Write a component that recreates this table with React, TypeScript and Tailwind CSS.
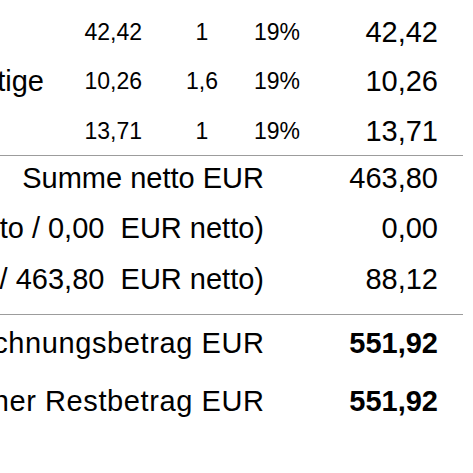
import React from 'react';

interface ItemRow {
  label: string;
  price: string;
  qty: string;
  tax: string;
  total: string;
}

interface SumRow {
  label: string;
  value: string;
  bold?: boolean;
}

const items: ItemRow[] = [
  { label: '', price: '42,42', qty: '1', tax: '19%', total: '42,42' },
  { label: 'Sonstige', price: '10,26', qty: '1,6', tax: '19%', total: '10,26' },
  { label: '', price: '13,71', qty: '1', tax: '19%', total: '13,71' },
];

const sums: SumRow[] = [
  { label: 'Summe netto EUR', value: '463,80' },
  { label: 'zzgl. USt. 0% (0,00 EUR brutto / 0,00  EUR netto)', value: '0,00' },
  { label: 'zzgl. USt. 19% (551,92 EUR brutto / 463,80  EUR netto)', value: '88,12' },
];

const totals: SumRow[] = [
  { label: 'Rechnungsbetrag EUR', value: '551,92', bold: true },
  { label: 'Offener Restbetrag EUR', value: '551,92', bold: true },
];

const SumLine: React.FC<{ row: SumRow }> = ({ row }) => (
  <div className="flex h-[30px] items-center leading-none text-[29px]">
    {/* label overflows to the left when it is longer than the column */}
    <div className="flex w-[464px] shrink-0 justify-end">
      <span className={`shrink-0 whitespace-pre ${row.bold ? 'tracking-[0.6px] mr-[-0.6px]' : ''}`}>{row.label}</span>
    </div>
    <span className={`w-[174px] shrink-0 text-right ${row.bold ? 'font-bold' : ''}`}>{row.value}</span>
  </div>
);

export default function App() {
  return (
    <div className="w-[473px] h-[473px] overflow-hidden bg-white text-black font-['Liberation_Sans',Arial,sans-serif]">
      <div className="ml-[-200px] w-[663px]">
        {/* positions */}
        <div className="flex flex-col gap-[19.5px] pt-[17px] pb-[9px]">
          {items.map((it, i) => (
            <div key={i} className="flex h-[30px] items-center leading-none">
              <span className="w-[244px] shrink-0 text-right text-[29px] whitespace-nowrap">{it.label}</span>
              <span className="w-[98px] shrink-0 text-right text-[23px]">{it.price}</span>
              <span className="ml-[20px] w-[80px] shrink-0 text-center text-[23px]">{it.qty}</span>
              <span className="w-[58px] shrink-0 text-right text-[23px]">{it.tax}</span>
              <span className="w-[138px] shrink-0 text-right text-[29px]">{it.total}</span>
            </div>
          ))}
        </div>

        {/* sums */}
        <div className="border-t border-[#9c9c9c] pt-[7px] pb-[20px] flex flex-col gap-[20.5px]">
          {sums.map((s, i) => (
            <SumLine key={i} row={s} />
          ))}
        </div>

        {/* totals */}
        <div className="border-t border-[#9c9c9c] pt-[13px] flex flex-col gap-[28px]">
          {totals.map((s, i) => (
            <SumLine key={i} row={s} />
          ))}
        </div>
      </div>
    </div>
  );
}
